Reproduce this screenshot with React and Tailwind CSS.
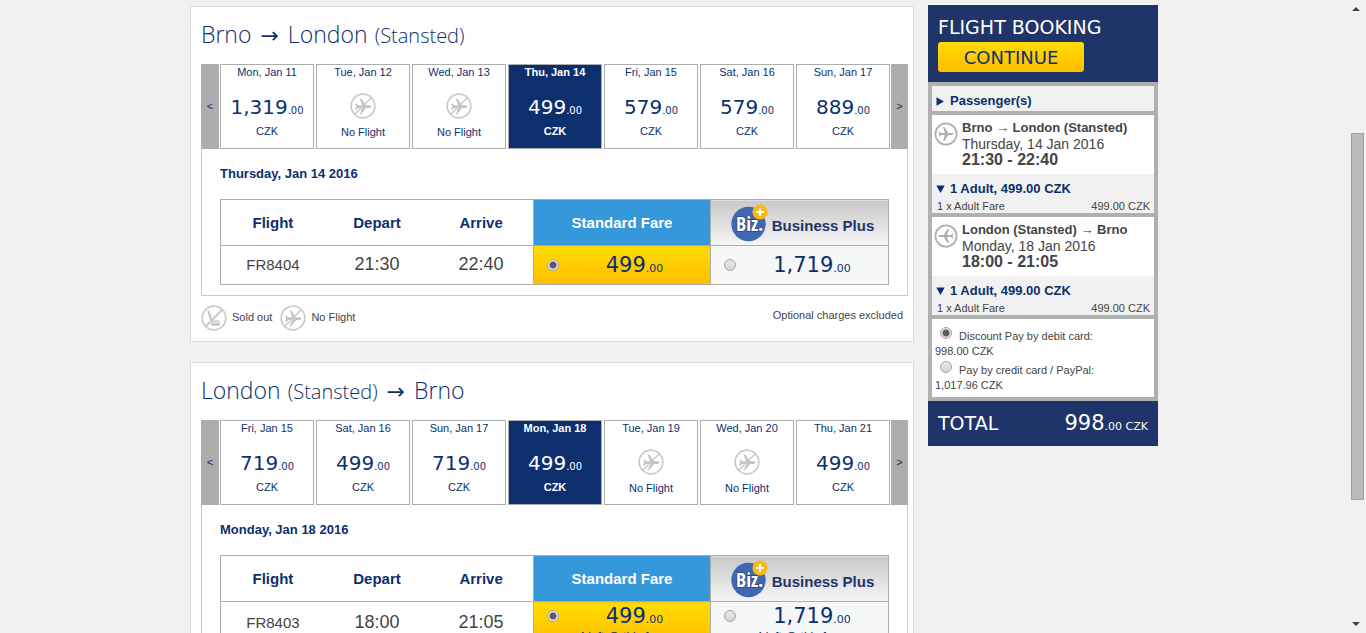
const PLANE =
  "M21 16v-2l-8-5V3.5c0-.83-.67-1.5-1.5-1.5S10 2.67 10 3.5V9l-8 5v2l8-2.5V19l-2 1.5V22l3.5-1 3.5 1v-1.5L13 19v-5.5l8 2.5z";

const trips = [
  {
    id: "out",
    title: [{ city: "Brno" }, { city: "London", airport: "(Stansted)" }],
    days: [
      { date: "Mon, Jan 11", price: "1,319" },
      { date: "Tue, Jan 12" },
      { date: "Wed, Jan 13" },
      { date: "Thu, Jan 14", price: "499", selected: true },
      { date: "Fri, Jan 15", price: "579" },
      { date: "Sat, Jan 16", price: "579" },
      { date: "Sun, Jan 17", price: "889" },
    ],
    heading: "Thursday, Jan 14 2016",
    flight: "FR8404",
    depart: "21:30",
    arrive: "22:40",
  },
  {
    id: "back",
    title: [{ city: "London", airport: "(Stansted)" }, { city: "Brno" }],
    days: [
      { date: "Fri, Jan 15", price: "719" },
      { date: "Sat, Jan 16", price: "499" },
      { date: "Sun, Jan 17", price: "719" },
      { date: "Mon, Jan 18", price: "499", selected: true },
      { date: "Tue, Jan 19" },
      { date: "Wed, Jan 20" },
      { date: "Thu, Jan 21", price: "499" },
    ],
    heading: "Monday, Jan 18 2016",
    flight: "FR8403",
    depart: "18:00",
    arrive: "21:05",
    note: "4 left @ this fare",
  },
];

function NoFlightIcon() {
  return (
    <svg width="26" height="26" viewBox="0 0 26 26" aria-hidden="true" className="shrink-0">
      <circle cx="13" cy="13" r="11.8" fill="none" stroke="#c8cacd" strokeWidth="1.7" />
      <path d="M21.2 4.8 4.8 21.2" stroke="#c8cacd" strokeWidth="1.5" />
      <path
        d="M21.4 13.6c0-.9-1-1.3-2-1.3h-3.2L11 5.4H9.6l2.5 6.9H8.3L6.4 10.4H5.2l.9 3.2-.9 3.2h1.2l1.9-1.9h3.8l-2.5 6.3H11l5.2-6.3h3.2c1 0 2-.4 2-1.3z"
        fill="#c3c5c9"
        stroke="#fff"
        strokeWidth=".7"
        paintOrder="stroke"
      />
    </svg>
  );
}

function SoldOutIcon() {
  return (
    <svg width="26" height="26" viewBox="0 0 26 26" aria-hidden="true" className="shrink-0">
      <circle cx="13" cy="13" r="11.8" fill="none" stroke="#c8cacd" strokeWidth="1.7" />
      <path d="M6.2 5.8q1.8-1 2.6 1l2.8 8.6h6q1.4 0 1.4 1.6H9.6z" fill="#c3c5c9" />
      <path d="M9.6 17.8H19v1.6q0 1.4-1.4 1.4h-7z" fill="#c3c5c9" />
      <path d="M21.2 4.8 4.8 21.2" stroke="#c8cacd" strokeWidth="2" />
    </svg>
  );
}

function LegIcon({ left }) {
  return (
    <svg width="24" height="24" viewBox="0 0 24 24" aria-hidden="true" className="shrink-0">
      <circle cx="12" cy="12" r="10.6" fill="none" stroke="#b0b0b0" strokeWidth="1.8" />
      <path
        d={PLANE}
        fill="#b0b0b0"
        transform={`translate(12 12) rotate(${left ? -90 : 90}) scale(.74) translate(-11.5 -12)`}
      />
    </svg>
  );
}

function BizIcon() {
  return (
    <svg width="37" height="38" viewBox="0 0 37 38" aria-hidden="true" className="shrink-0">
      <circle cx="17.5" cy="20" r="17.2" fill="#3f68b0" />
      <text x="5" y="27" fontSize="20" fontWeight="700" fill="#fff" stroke="#1f3468" strokeWidth="1" paintOrder="stroke" fontFamily="'Liberation Sans Narrow', 'Open Sans Condensed', sans-serif">
        Biz.
      </text>
      <circle cx="29" cy="8" r="7.6" fill="#f9b90f" />
      <path d="M29 4.2v7.6M25.2 8h7.6" stroke="#fff" strokeWidth="2.2" />
    </svg>
  );
}

function Radio({ label, className = "", ...props }) {
  return (
    <input
      type="radio"
      aria-label={label}
      className={
        "size-3 shrink-0 appearance-none rounded-full border border-[#a3a3a3] bg-linear-to-b from-[#e9e9e9] to-[#d6d6d6] checked:bg-[radial-gradient(circle,#5c5c5c_0_3px,#e6e6e6_4px)] " +
        className
      }
      {...props}
    />
  );
}

function Price({ value, large }) {
  return (
    <span
      className={
        'block font-["DejaVu_Sans",Verdana,sans-serif] ' +
        (large ? "h-[26px] text-[21px] leading-[26px]" : "h-7 text-[20px] leading-7")
      }
    >
      {value}
      <span className={large ? "text-[11px]" : "text-[10px]"}>.00</span>
    </span>
  );
}

function Place({ city, airport }) {
  return (
    <>
      {city}
      {airport && <span className="ml-0.5 text-[20px]"> {airport}</span>}
    </>
  );
}

function Day({ date, price, selected }) {
  return (
    <button
      type="button"
      className={
        "flex min-w-0 flex-1 flex-col items-center border border-[#adadad] text-[11px] leading-[14px] " +
        (selected ? "bg-[#0d2f6e] font-bold text-white" : "bg-white text-[#0d2f6e]")
      }
    >
      <span>{date}</span>
      {price ? (
        <>
          <span className="mt-3.5 font-normal">
            <Price value={price} />
          </span>
          <span className="mt-[3px]">CZK</span>
        </>
      ) : (
        <>
          <span className="mt-3.5">
            <NoFlightIcon />
          </span>
          <span className="mt-1.5">No Flight</span>
        </>
      )}
    </button>
  );
}

function FareCell({ trip, value, label, checked }) {
  return (
    <label className="block">
      <span className={"flex items-center pl-[13px] " + (trip.note ? "py-px" : "")}>
        <Radio name={trip.id} defaultChecked={checked} label={label} />
        <span className="flex-1 text-center">
          <Price value={value} large />
        </span>
      </span>
      {trip.note && <span className="block text-center text-xs leading-3.5">{trip.note}</span>}
    </label>
  );
}

function Trip({ trip }) {
  return (
    <section className="border border-[#dcdcdc] bg-white pl-2.5 pr-[5px]">
      <h2 className='h-[57px] font-["Open_Sans",sans-serif] text-[23px] font-light leading-[54px]'>
        <Place {...trip.title[0]} />
        <span className='mx-0.5 font-["DejaVu_Sans",sans-serif] text-[22px] font-normal leading-none'> → </span>
        <Place {...trip.title[1]} />
      </h2>
      <div className="flex h-[85px] gap-px">
        <button type="button" aria-label="Earlier dates" className="w-[18px] bg-[#adadad] text-[11px]">
          &lt;
        </button>
        <div className="flex min-w-0 flex-1 gap-0.5">
          {trip.days.map((d) => (
            <Day key={d.date} {...d} />
          ))}
        </div>
        <button type="button" aria-label="Later dates" className="w-[17px] bg-[#adadad] text-[11px]">
          &gt;
        </button>
      </div>
      <div className="border-x border-b border-[#c8c8c8] px-[18px] pb-2.5 pt-[17px]">
        <h3 className="text-[13px] font-bold leading-4">{trip.heading}</h3>
        <table className="mt-[17px] w-full table-fixed border-collapse border border-[#adadad] text-center">
          <colgroup>
            <col />
            <col />
            <col />
            <col className="w-[177px]" />
            <col className="w-[178px]" />
          </colgroup>
          <thead>
            <tr className="h-[46px] text-[15px] leading-5">
              <th>Flight</th>
              <th>Depart</th>
              <th>Arrive</th>
              <th className="border-x border-[#adadad] bg-[#3498db] text-white">Standard Fare</th>
              <th className="bg-linear-to-b from-[#c8c8c8] to-[#f6f6f6] text-[#1f3468]">
                <span className="flex items-center justify-center gap-1 pl-1.5">
                  <BizIcon />
                  <span className="pt-1.5">Business Plus</span>
                </span>
              </th>
            </tr>
          </thead>
          <tbody>
            <tr className="h-[39px] border-t border-[#adadad]">
              <td className="text-[15px] text-[#444]">{trip.flight}</td>
              <td className="pb-0.5 text-[18px] text-[#444]">{trip.depart}</td>
              <td className="pb-0.5 text-[18px] text-[#444]">{trip.arrive}</td>
              <td className="border-x border-[#adadad] bg-linear-to-b from-[#ffdd00] to-[#ffbc00]">
                <FareCell trip={trip} value="499" label="Standard Fare" checked />
              </td>
              <td className="bg-[#f5f8f7]">
                <FareCell trip={trip} value="1,719" label="Business Plus" />
              </td>
            </tr>
          </tbody>
        </table>
      </div>
      <div className="flex pb-2.5 pr-[5px] pt-[9px] text-[11px] leading-6 text-[#444]">
        <SoldOutIcon />
        <span className="ml-[5px] mr-2">Sold out</span>
        <NoFlightIcon />
        <span className="ml-[5px]">No Flight</span>
        <span className="ml-auto leading-5">Optional charges excluded</span>
      </div>
    </section>
  );
}

function Leg({ route, date, time, left }) {
  return (
    <section className="bg-[#f1f1f1] text-[#444]">
      <div className="flex gap-1 bg-white pb-1.5 pl-0.5 pt-[5px] leading-4">
        <div className="w-6 pt-0.5">
          <LegIcon left={left} />
        </div>
        <div>
          <h3 className="text-[13px] font-bold leading-4">{route}</h3>
          <p className="text-[14px] leading-4">{date}</p>
          <p className="text-[16px] font-bold leading-4">{time}</p>
        </div>
      </div>
      <details open className="px-1 pt-[7px]">
        <summary className="flex items-center gap-[5px] text-[13px] font-bold leading-4 text-[#0d2f6e]">
          <svg width="9" height="8" viewBox="0 0 9 8" aria-hidden="true">
            <path d="M.3.5h8.4L4.5 8z" fill="currentColor" />
          </svg>
          1 Adult, 499.00 CZK
        </summary>
        <div className="mt-0.5 flex justify-between pl-px text-[11px] leading-3.5">
          <span>1 x Adult Fare</span>
          <span>499.00 CZK</span>
        </div>
      </details>
    </section>
  );
}

function PayOption({ label, amount, checked }) {
  return (
    <label className="block">
      <span className="flex h-[17px] gap-[7px] pl-[5px]">
        <Radio name="pay" defaultChecked={checked} label={label} />
        <span className="self-end">{label}</span>
      </span>
      <span className="block">{amount}</span>
    </label>
  );
}

function Booking() {
  return (
    <aside className="w-[230px] shrink-0 bg-[#b0b0b0]">
      <div className='bg-[#1f3468] px-2.5 pb-2.5 pt-[9px] font-["DejaVu_Sans",Verdana,sans-serif]'>
        <h2 className="mb-0.5 text-[19px] leading-[26px] text-white">FLIGHT BOOKING</h2>
        <button
          type="button"
          className="block w-[146px] rounded-[3px] bg-linear-to-b from-[#ffdd00] to-[#ffbc00] pt-px text-[18px] leading-[29px] text-[#0d2f6e]"
        >
          CONTINUE
        </button>
      </div>
      <div className="flex flex-col gap-1 p-1">
        <details className="bg-[#f1f1f1]">
          <summary className="flex items-center gap-1.5 pb-0.5 pl-1 pt-[7px] text-[13px] font-bold leading-4">
            <svg width="8" height="9" viewBox="0 0 8 9" aria-hidden="true">
              <path d="M.5.3v8.4L8 4.5z" fill="currentColor" />
            </svg>
            Passenger(s)
          </summary>
        </details>
        <Leg route="Brno → London (Stansted)" date="Thursday, 14 Jan 2016" time="21:30 - 22:40" />
        <Leg route="London (Stansted) → Brno" date="Monday, 18 Jan 2016" time="18:00 - 21:05" left />
        <div className="flex flex-col gap-0.5 bg-white pb-1 pl-[3px] pt-2 text-[11px] leading-[15px] text-[#444]">
          <PayOption label="Discount Pay by debit card:" amount="998.00 CZK" checked />
          <PayOption label="Pay by credit card / PayPal:" amount="1,017.96 CZK" />
        </div>
      </div>
      <div className='flex h-[45px] items-baseline justify-between bg-[#1f3468] px-2.5 font-["DejaVu_Sans",Verdana,sans-serif] leading-[45px] text-white'>
        <span className="text-[19px]">TOTAL</span>
        <span className="text-[21px]">
          998<span className="text-[11px]">.00 CZK</span>
        </span>
      </div>
    </aside>
  );
}

export default function App() {
  return (
    <div className='flex h-screen overflow-hidden bg-[#f1f1f1] font-["Liberation_Sans",Arial,sans-serif] text-[#0d2f6e]'>
      <div className="min-w-0 flex-1 overflow-hidden">
        <div className="mx-auto flex max-w-[968px] items-start gap-3.5 pt-[5px]">
          <main className="flex min-w-0 flex-1 flex-col gap-5 pt-px">
            {trips.map((t) => (
              <Trip key={t.id} trip={t} />
            ))}
          </main>
          <Booking />
        </div>
      </div>
      <div className="flex w-[18px] flex-col items-center pb-[7px] pr-0.5 pt-[7px] text-[#444]" aria-hidden="true">
        <svg width="8" height="4" viewBox="0 0 8 4">
          <path d="M0 4 4 0l4 4z" fill="currentColor" />
        </svg>
        <div className="flex min-h-0 w-full flex-1 flex-col pb-[122px] pl-[3px] pt-[122px]">
          <div className="flex-1 border border-[#a0a0a0] bg-[#bbb]" />
        </div>
        <svg width="8" height="4" viewBox="0 0 8 4">
          <path d="M0 0h8L4 4z" fill="currentColor" />
        </svg>
      </div>
    </div>
  );
}
